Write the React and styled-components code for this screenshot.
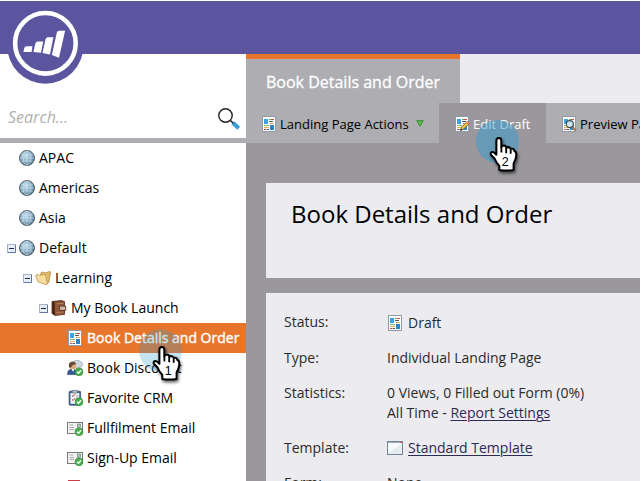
import React from "react";
import styled, { createGlobalStyle, css } from "styled-components";

const Global = createGlobalStyle`
  * { box-sizing: border-box; }
  body { margin: 0; background: #fff; overflow: hidden; font: 14px/20px "Open Sans", sans-serif; color: #000; }
  svg { display: block; flex: none; overflow: visible; }
`;

const Page = styled.div`
  position: relative;
  width: 640px;
  height: 481px;
  padding-top: 1px;
  overflow: hidden;
  display: flex;
  flex-direction: column;
`;
const TopBar = styled.header`
  height: 53px;
  flex: none;
  background: #5b549f;
`;
const Logo = styled.div`
  position: absolute;
  left: 7px;
  top: 6px;
`;
const Body = styled.div`
  flex: 1;
  min-height: 0;
  display: grid;
  grid-template-columns: 246px 1fr;
`;
const Sidebar = styled.aside`
  background: #fff;
  overflow: hidden;
`;
const Search = styled.div`
  height: 89px;
  display: flex;
  justify-content: space-between;
  align-items: flex-end;
  padding: 0 6px 8px 8px;
  border-bottom: 5px solid #aeadb2;
`;
const SearchText = styled.span`
  font-size: 16px;
  line-height: 26px;
  font-style: italic;
  color: #b0b0b0;
`;
const TreeRow = styled.div`
  height: 30px;
  display: flex;
  align-items: center;
  gap: 4px;
  padding-left: ${(p) => p.$indent}px;
  white-space: nowrap;
  ${(p) =>
    p.$selected &&
    css`
      background: #e8752c;
      color: #fff;
      -webkit-text-stroke: 0.4px #fff;
    `}
`;
const Toggle = styled.span`
  width: 9px;
  margin-right: -1px;
`;
const Main = styled.main`
  background: #9a989d;
  overflow: hidden;
`;
const TabStrip = styled.div`
  height: 49px;
  background: #ecebf0;
`;
const Tab = styled.div`
  width: 214px;
  height: 49px;
  padding: 12px 0 0 20px;
  border-top: 5px solid #e8752c;
  background: #aeadb2;
  color: #fff;
  font-size: 16px;
  line-height: 22px;
  white-space: nowrap;
  -webkit-text-stroke: 0.3px #fff;
`;
const Actions = styled.nav`
  display: flex;
  height: 40px;
`;
const Action = styled.div`
  flex: none;
  width: ${(p) => p.$width}px;
  display: flex;
  align-items: center;
  gap: 4px;
  padding: 2px 0 0 16px;
  background: ${(p) => (p.$active ? "#9a989d" : "#aeadb2")};
  color: ${(p) => (p.$active ? "#fff" : "#000")};
  font-size: 13px;
  white-space: nowrap;
`;
const Caret = styled.span`
  margin: -2px 0 0 3px;
`;
const Panels = styled.div`
  padding: 40px 0 0 20px;
  display: grid;
  grid-template-rows: 95px 200px;
  gap: 15px;
`;
const TitlePanel = styled.section`
  background: #ecebf0;
  padding: 15px 0 0 25px;
  font-size: 24px;
  line-height: 32px;
`;
const InfoPanel = styled.section`
  background: #ecebf0;
  padding: 19px 0 0 18px;
  color: #2b2b2b;
`;
const Field = styled.div`
  display: grid;
  grid-template-columns: 103px 1fr;
  margin-bottom: 15px;
  min-height: 20px;
  line-height: 20px;
  &:first-child {
    margin-bottom: 16px;
  }
`;
const Value = styled.div`
  white-space: nowrap;
`;
const IconValue = styled.div`
  display: flex;
  align-items: center;
  gap: 5px;
  padding-top: ${(p) => p.$drop || 0}px;
  height: 20px;
`;
const Link = styled.a`
  color: #2c2a57;
  text-decoration: underline;
  text-decoration-thickness: 1px;
  text-underline-offset: 2px;
`;
const Pointer = styled.div`
  position: absolute;
  left: ${(p) => p.$x}px;
  top: ${(p) => p.$y}px;
`;

const LogoMark = () => (
  <svg width="77" height="78" viewBox="0 0 77 78">
    <circle cx="38.3" cy="39.5" r="38.2" fill="#5b549f" />
    <circle cx="38.4" cy="37.3" r="30.3" fill="none" stroke="#fff" strokeWidth="4.6" />
    <g fill="#fff">
      <path d="M16.4 46l.9-4q.4-1.8 2.2-1.8h5.9L24.6 46z" />
      <path d="M26.4 46l2-8.5q.5-2 2.5-2h5.3L34 46.7z" />
      <path d="M35.5 46.9l3-13.5q.5-2.1 2.6-2.1h5.3L42.9 48.5z" />
      <path d="M44.9 48.9l4.8-22q.5-2.1 2.6-2.1h5.8L52 51.7z" />
    </g>
  </svg>
);

const Magnifier = () => (
  <svg width="22" height="22" viewBox="0 0 22 22">
    <path d="M14.9 14.7l5.8 5.6" stroke="#3a9bd5" strokeWidth="4" />
    <path d="M12.5 12.5l2.7 2.7" stroke="#222" strokeWidth="1.6" />
    <circle cx="7.5" cy="7.5" r="6.7" fill="#fff" stroke="#222" strokeWidth="1.4" />
  </svg>
);

const Minus = () => (
  <svg width="9" height="9" viewBox="0 0 9 9">
    <rect x=".5" y=".5" width="8" height="8" fill="#e8edf6" stroke="#a3b2cd" />
    <path d="M1 8.5h7.5V1" fill="none" stroke="#6478a5" />
    <path d="M2 4.5h5" stroke="#1d2c55" />
  </svg>
);

const Globe = () => (
  <svg width="16" height="16" viewBox="0 0 16 16">
    <defs>
      <radialGradient id="globe" cx=".42" cy=".35" r=".7">
        <stop offset="0" stopColor="#c3dbe9" />
        <stop offset=".55" stopColor="#83a9c1" />
        <stop offset="1" stopColor="#4b6a80" />
      </radialGradient>
    </defs>
    <circle cx="8" cy="8" r="7.5" fill="url(#globe)" stroke="#52616c" />
    <g fill="none" stroke="#dcecf5" strokeWidth=".7" opacity=".8">
      <path d="M8 1v14M1 8h14M2.3 4.6q5.7 1.3 11.4 0M2.3 11.4q5.7-1.3 11.4 0" />
      <ellipse cx="8" cy="8" rx="4" ry="7" />
    </g>
  </svg>
);

const Folder = () => (
  <svg width="16" height="16" viewBox="0 0 16 16">
    <path d="M5.5 4.5L6.6 2l3.6.9 4.9-1.4.4 1.2-1.6 9.5-3 2.3z" fill="#e3bd69" stroke="#a67a2e" strokeWidth=".7" />
    <path d="M.5 5.3l2.6-.9 1.2 1 6-1.2 2.2 9.9-1.6.6L3 11.8z" fill="#f8dda0" stroke="#b48a3d" strokeWidth=".7" />
  </svg>
);

const Book = () => (
  <svg width="16" height="16" viewBox="0 0 16 16">
    <path d="M1 1.5L10.5.6l3 1v12.8L4 15.5l-3-2z" fill="#774329" stroke="#4e2817" strokeWidth=".8" />
    <path d="M3.6 2.4l9.6-.8v12.7l-9.1 1z" fill="#8f5637" />
    <path d="M1.2 1.7l2.4.8.4 12.6-2.8-1.8z" fill="#4c2414" />
    <path d="M8.4 6h6.3v4.5H9.2L8.4 8.8z" fill="#c9b3a7" stroke="#5b301e" strokeWidth=".9" />
    <path d="M5.6 3.9q5-.8 7-.4M5.6 12.7l6.8-.7" stroke="#bb8a6b" fill="none" strokeWidth=".8" />
  </svg>
);

const PageShapes = () => (
  <>
    <rect x=".5" y=".5" width="13" height="15" fill="#fff" stroke="#8f9ba9" />
    <rect x="2" y="3" width="4" height="5" fill="#3aa2e6" />
    <rect x="8" y="9" width="4" height="5" fill="#2a84cb" />
    <g strokeWidth=".9">
      <path d="M7 3.5h2" stroke="#4ca347" />
      <path d="M9 3.5h3M2 13.5h2M8 7.5h1" stroke="#c4383d" />
      <path d="M7 5.5h4M4.5 13.5H7" stroke="#444" />
      <path d="M9 7.5h3M2 11.5h5" stroke="#d6ac43" />
      <path d="M2 9.5h5" stroke="#69b34f" />
    </g>
  </>
);
const LandingPage = ({ wide }) => (
  <svg width={wide ? 16 : 14} height="16" viewBox={wide ? "-1 0 16 16" : "0 0 14 16"}>
    <PageShapes />
  </svg>
);
const EditPage = () => (
  <svg width="14" height="16" viewBox="0 0 14 16">
    <PageShapes />
    <path d="M5.5 14.5l1-3.3 5.6-5.6 2 2-5.6 5.6z" fill="#efc94f" stroke="#634d20" strokeWidth=".8" />
    <path d="M5.3 14.7l.8-2 1.2 1.2z" fill="#222" />
    <path d="M11.2 6.4l1.4-1.4 2 1.9-1.5 1.4z" fill="#e77a66" />
  </svg>
);
const PreviewPage = () => (
  <svg width="14" height="16" viewBox="0 0 14 16">
    <PageShapes />
    <path d="M10.2 10.8l3.4 3.6" stroke="#b77940" strokeWidth="2.2" />
    <circle cx="7.8" cy="8.1" r="3.5" fill="#cee8f3" stroke="#414951" strokeWidth="1.1" />
  </svg>
);

const Check = () => (
  <>
    <circle cx="12" cy="11.8" r="3.9" fill="#4bb04c" stroke="#2f8b3a" strokeWidth=".7" />
    <path d="M10 11.8l1.5 1.5 2.6-3" fill="none" stroke="#fff" strokeWidth="1.3" />
  </>
);
const Person = () => (
  <svg width="16" height="16" viewBox="0 0 16 16">
    <ellipse cx="10.2" cy="4.3" rx="5.3" ry="3.9" fill="#cfd6dc" stroke="#929fab" strokeWidth=".7" />
    <path d="M.5 14.6q-.1-4.6 3.2-5.3h3.8q3 1 2.8 5.3z" fill="#315a94" stroke="#213e69" strokeWidth=".6" />
    <path d="M4.5 9l1.5 2.7L7.6 9z" fill="#fff" />
    <circle cx="5.7" cy="6" r="3.2" fill="#dba77a" />
    <path d="M2 7Q.9 1.8 5.6 1.6q3 .1 3.6 2.6L6.1 4.8 3.4 8z" fill="#6b4a33" />
    <Check />
  </svg>
);
const Clipboard = () => (
  <svg width="16" height="16" viewBox="0 0 16 16">
    <rect x="2.1" y="1.2" width="11.5" height="14" rx="1" fill="#3b6490" stroke="#284967" strokeWidth=".7" />
    <path d="M3.5 3h8.8v10.8H3.5z" fill="#f5f9fc" />
    <path d="M5.2.4h5.2v2.7H5.2z" fill="#b6bdc6" stroke="#596572" strokeWidth=".6" />
    <path d="M5 5.5l1.2 1L8 4.2M5 9.5l1.2 1L8 8.2" fill="none" stroke="#b33737" />
    <path d="M9 6h2.5M9 8h2.5" stroke="#77899a" strokeWidth=".8" />
    <Check />
  </svg>
);
const Email = () => (
  <svg width="16" height="16" viewBox="0 0 16 16">
    <rect x=".5" y="2.5" width="15" height="11" fill="#f1f2ef" stroke="#747b78" />
    <path d="M2.5 5h3.5M2.5 7.5h4.5M2.5 9.5h4.5" stroke="#969c9a" strokeWidth=".8" />
    <rect x="10.5" y="4" width="3" height="3.2" fill="#acc6b5" stroke="#60776a" strokeWidth=".6" />
    <Check />
  </svg>
);
const RedItem = () => (
  <svg width="16" height="16" viewBox="0 0 16 16">
    <rect x="1" y="0" width="12" height="15" fill="#cb4047" />
  </svg>
);
const Template = () => (
  <svg width="16" height="14" viewBox="0 0 16 14">
    <rect x=".5" y=".5" width="15" height="13" fill="#f6fafa" stroke="#718692" />
    <path d="M1 12.5L14.5 3v10H1z" fill="#e3edef" />
    <path d="M1 1.5h14" stroke="#9fb0b9" />
    <path d="M13 1.5h2" stroke="#d85a4a" />
  </svg>
);
const GreenCaret = () => (
  <svg width="8" height="7" viewBox="0 0 8 7">
    <path d="M.8.7h6.4L4 6.2z" fill="#62c04a" stroke="#2f8a2b" />
  </svg>
);

const Hand = ({ label, opacity }) => (
  <svg width="46" height="58" viewBox="0 0 46 58">
    <circle cx="21.5" cy="21.5" r="21.5" fill="#329ccf" opacity={opacity} />
    <g style={{ filter: "drop-shadow(1px 2px 1.5px #0009)" }}>
      <path
        d="M20.4 20.6q0-2.5 2.4-2.5t2.5 2.5v6.6q.6-1.8 2.5-1.8 2.2.1 2.5 2.3 2.5-1.6 4.4 1.1 2.9-.8 3.7 2.2 2.3.6 1.8 5.2-.3 3.4-2.6 7.4v6.4q-7.2 1.2-14.3 0v-4.1q-3.2-3.3-4.7-7.4l-3.5-3.5q-1.2-2.3.9-3 1.9-.3 4.4 2.8z"
        fill="#fff"
        stroke="#000"
        strokeWidth="2"
        strokeLinejoin="round"
      />
      <path d="M25.4 27v5.5M30.2 28v5.2M34.7 29.5v4.2" stroke="#000" strokeWidth="1.8" />
    </g>
    <text x="29.3" y="46.3" textAnchor="middle" fontFamily="Liberation Sans, sans-serif" fontSize="12.5">
      {label}
    </text>
  </svg>
);

const tree = [
  { label: "APAC", icon: Globe, indent: 19 },
  { label: "Americas", icon: Globe, indent: 19 },
  { label: "Asia", icon: Globe, indent: 19 },
  { label: "Default", icon: Globe, indent: 7, open: true },
  { label: "Learning", icon: Folder, indent: 23, open: true },
  { label: "My Book Launch", icon: Book, indent: 39, open: true },
  { label: "Book Details and Order", icon: () => <LandingPage wide />, indent: 67, selected: true },
  { label: "Book Discount", icon: Person, indent: 67 },
  { label: "Favorite CRM", icon: Clipboard, indent: 67 },
  { label: "Fullfilment Email", icon: Email, indent: 67 },
  { label: "Sign-Up Email", icon: Email, indent: 67 },
  { label: "", icon: RedItem, indent: 67 },
];

export default function App() {
  return (
    <>
      <Global />
      <Page>
        <TopBar />
        <Body>
          <Sidebar>
            <Search>
              <SearchText>Search...</SearchText>
              <Magnifier />
            </Search>
            {tree.map(({ label, icon: Icon, indent, open, selected }, i) => (
              <TreeRow key={i} $indent={indent} $selected={selected}>
                {open && (
                  <Toggle>
                    <Minus />
                  </Toggle>
                )}
                <Icon />
                {label}
              </TreeRow>
            ))}
          </Sidebar>
          <Main>
            <TabStrip>
              <Tab>Book Details and Order</Tab>
            </TabStrip>
            <Actions>
              <Action $width={193}>
                <LandingPage />
                Landing Page Actions
                <Caret>
                  <GreenCaret />
                </Caret>
              </Action>
              <Action $width={107} $active>
                <EditPage />
                Edit Draft
              </Action>
              <Action $width={120}>
                <PreviewPage />
                Preview Page
              </Action>
            </Actions>
            <Panels>
              <TitlePanel>Book Details and Order</TitlePanel>
              <InfoPanel>
                <Field>
                  Status:
                  <IconValue $drop={2}>
                    <LandingPage wide />
                    Draft
                  </IconValue>
                </Field>
                <Field>
                  Type:<Value>Individual Landing Page</Value>
                </Field>
                <Field>
                  Statistics:
                  <Value>
                    0 Views, 0 Filled out Form (0%)
                    <br />
                    All Time - <Link>Report Settings</Link>
                  </Value>
                </Field>
                <Field>
                  Template:
                  <IconValue>
                    <Template />
                    <Link>Standard Template</Link>
                  </IconValue>
                </Field>
                <Field>
                  Form:<Value>None</Value>
                </Field>
              </InfoPanel>
            </Panels>
          </Main>
        </Body>
        <Logo>
          <LogoMark />
        </Logo>
        <Pointer $x={139} $y={329}>
          <Hand label="1" opacity={0.28} />
        </Pointer>
        <Pointer $x={476} $y={120}>
          <Hand label="2" opacity={0.5} />
        </Pointer>
      </Page>
    </>
  );
}
